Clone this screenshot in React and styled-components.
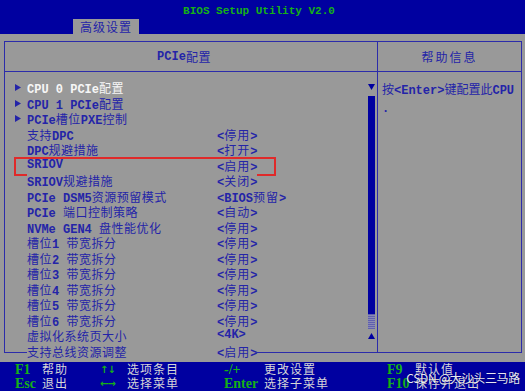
import React from 'react';
import styled, { createGlobalStyle } from 'styled-components';

const BAR = '#0000a0';
const INK = '#2424a8';
const GRAY = '#999999';
const LINE = '#2c2caa';
const GREEN = '#16b016';

const Global = createGlobalStyle`
  html, body { margin: 0; padding: 0; background: ${GRAY}; }
  body { font-family: "Liberation Mono", "Noto Sans CJK SC", monospace; }
`;

const Han = styled.span`
  font-family: "Noto Sans CJK SC", sans-serif;
  font-weight: 400;
  letter-spacing: ${(p) => p.$ls}px;
`;

function T({ children, ls = 0.5 }) {
  const parts = String(children).split(/([\u3400-\u9fff]+)/);
  return parts.map((s, i) =>
    i % 2 ? (
      <Han key={i} $ls={ls}>
        {s}
      </Han>
    ) : (
      s
    )
  );
}

const Screen = styled.div`
  position: relative;
  width: 525px;
  height: 391px;
  overflow: hidden;
  background: ${GRAY};
  display: flex;
  flex-direction: column;
`;

const TopBar = styled.header`
  height: 34px;
  background: ${BAR};
  display: flex;
  flex-direction: column;
  justify-content: space-between;
`;

const Title = styled.div`
  padding: 4px 7px 0 0;
  text-align: center;
  color: ${GREEN};
  font: bold 11px/14px "Liberation Mono", monospace;
`;

const Tab = styled.div`
  margin-left: 73px;
  width: 66px;
  height: 15px;
  background: ${GRAY};
  color: ${INK};
  font-size: 12px;
  line-height: 16px;
  text-align: center;
`;

const Main = styled.main`
  flex: 1;
  padding: 7px 3px 0 4px;
`;

const Panel = styled.section`
  width: 516px;
  border: 1px solid ${LINE};
  display: grid;
  grid-template-columns: 373px 143px;
  grid-template-rows: 30px 280px;
`;

const HeadCell = styled.div`
  border-bottom: 1px solid ${LINE};
  border-right: ${(p) => (p.$divider ? `1px solid ${LINE}` : 'none')};
  display: flex;
  align-items: center;
  justify-content: center;
  padding-right: ${(p) => p.$shift || 0}px;
  color: ${INK};
  font-weight: bold;
  font-size: 12px;
`;

const LeftBody = styled.div`
  border-right: 1px solid ${LINE};
  display: flex;
  min-height: 0;
`;

const List = styled.div`
  flex: 1;
  padding-top: 8px;
  display: flex;
  flex-direction: column;
`;

const Row = styled.div`
  position: relative;
  display: flex;
  height: 15.5px;
  line-height: 15.5px;
  font-size: 12px;
  font-weight: bold;
  color: ${INK};
`;

const Gutter = styled.div`
  width: 22px;
  display: flex;
  align-items: center;
  padding-left: 10px;
  box-sizing: border-box;
`;

const Content = styled.div`
  width: 230px;
  display: flex;
  background: ${GRAY};
  white-space: nowrap;
`;

const Label = styled.span`
  width: 190px;
  flex: none;
  color: ${(p) => (p.$active ? '#f6f6f6' : INK)};
`;

const Value = styled.span`
  flex: none;
`;

const Mark = styled.div`
  position: absolute;
  left: 9px;
  top: -0.5px;
  width: 262px;
  height: 19px;
  box-sizing: border-box;
  border: 2px solid #e02a2a;
  pointer-events: none;
`;

const Scroll = styled.div`
  width: 7px;
  margin-right: 2px;
  padding-top: 11px;
  display: flex;
  flex-direction: column;
  align-items: center;
`;

const Thumb = styled.div`
  margin-top: 6px;
  width: 7px;
  height: 218px;
  background: ${BAR};
`;

const Stipple = styled.div`
  width: 7px;
  height: 15px;
  background-color: #8a8ab4;
  background-image: repeating-linear-gradient(
    0deg,
    rgba(60, 60, 170, 0.55) 0 1px,
    transparent 1px 2px
  );
  margin-bottom: 4px;
`;

const RightBody = styled.div`
  padding: 8px 0 0 4px;
  color: ${INK};
  font-size: 12px;
  font-weight: bold;
  line-height: 18px;
  white-space: nowrap;
`;

const Footer = styled.footer`
  height: 29px;
  box-sizing: border-box;
  background: ${BAR};
  padding: 1px 0 0 15px;
  display: grid;
  grid-template-columns: 27px 58px 27px 97px 40px 123px 28px 1fr;
  grid-auto-rows: 14px;
  align-items: center;
`;

const Key = styled.span`
  color: ${GREEN};
  font: bold 14px/14px "Liberation Serif", serif;
  white-space: nowrap;
`;

const ArrowKey = styled.span`
  color: ${GREEN};
  font: bold 10px/14px "DejaVu Sans", sans-serif;
  letter-spacing: -1px;
`;

const Desc = styled.span`
  color: #d6d6d6;
  font-size: 12px;
  line-height: 14px;
  white-space: nowrap;
`;

const Watermark = styled.div`
  position: absolute;
  right: 5px;
  bottom: 6px;
  color: rgba(255, 255, 255, 0.92);
  font: 12px/14px "Noto Sans CJK SC", sans-serif;
  text-shadow: 0 0 2px rgba(0, 0, 0, 0.5);
  letter-spacing: -0.3px;
`;

const Tri = ({ dir }) => (
  <svg width="7" height="7" viewBox="0 0 7 7">
    {dir === 'right' && <polygon points="0,0 6,3.5 0,7" fill={INK} />}
    {dir === 'down' && <polygon points="0,1 7,1 3.5,7" fill={BAR} />}
    {dir === 'up' && <polygon points="3.5,0 7,6 0,6" fill={BAR} />}
  </svg>
);

const rows = [
  { label: 'CPU 0 PCIe配置', sub: true, active: true },
  { label: 'CPU 1 PCIe配置', sub: true },
  { label: 'PCIe槽位PXE控制', sub: true },
  { label: '支持DPC', value: '<停用>' },
  { label: 'DPC规避措施', value: '<打开>' },
  { label: 'SRIOV', value: '<启用>', mark: true },
  { label: 'SRIOV规避措施', value: '<关闭>' },
  { label: 'PCIe DSM5资源预留模式', value: '<BIOS预留>' },
  { label: 'PCIe 端口控制策略', value: '<自动>' },
  { label: 'NVMe GEN4 盘性能优化', value: '<停用>' },
  { label: '槽位1 带宽拆分', value: '<停用>' },
  { label: '槽位2 带宽拆分', value: '<停用>' },
  { label: '槽位3 带宽拆分', value: '<停用>' },
  { label: '槽位4 带宽拆分', value: '<停用>' },
  { label: '槽位5 带宽拆分', value: '<停用>' },
  { label: '槽位6 带宽拆分', value: '<停用>' },
  { label: '虚拟化系统页大小', value: '<4K>' },
  { label: '支持总线资源调整', value: '<启用>' },
];

const keys = [
  [<Key>F1</Key>, '帮助', <ArrowKey>↑↓</ArrowKey>, '选项条目', <Key>-/+</Key>, '更改设置', <Key>F9</Key>, '默认值'],
  [<Key>Esc</Key>, '退出', <ArrowKey>←→</ArrowKey>, '选择菜单', <Key>Enter</Key>, '选择子菜单', <Key>F10</Key>, '保存并退出'],
];

export default function App() {
  return (
    <>
      <Global />
      <Screen>
        <TopBar>
          <Title>BIOS Setup Utility V2.0</Title>
          <Tab>
            <T ls={1}>高级设置</T>
          </Tab>
        </TopBar>
        <Main>
          <Panel>
            <HeadCell $divider $shift={14}>
              <T>PCIe配置</T>
            </HeadCell>
            <HeadCell>
              <T ls={2}>帮助信息</T>
            </HeadCell>
            <LeftBody>
              <List>
                {rows.map((r, i) => (
                  <Row key={i}>
                    <Gutter>{r.sub && <Tri dir="right" />}</Gutter>
                    <Content>
                      <Label $active={r.active}>
                        <T>{r.label}</T>
                      </Label>
                      {r.value && (
                        <Value>
                          <T ls={1}>{r.value}</T>
                        </Value>
                      )}
                    </Content>
                    {r.mark && <Mark />}
                  </Row>
                ))}
              </List>
              <Scroll>
                <Tri dir="down" />
                <Thumb />
                <Stipple />
                <Tri dir="up" />
              </Scroll>
            </LeftBody>
            <RightBody>
              <T ls={0}>按&lt;Enter&gt;键配置此CPU</T>
              <br />.
            </RightBody>
          </Panel>
        </Main>
        <Footer>
          {keys.map((line, li) =>
            line.map((item, i) =>
              i % 2 ? (
                <Desc key={`${li}-${i}`}>
                  <T ls={1}>{item}</T>
                </Desc>
              ) : (
                <React.Fragment key={`${li}-${i}`}>{item}</React.Fragment>
              )
            )
          )}
        </Footer>
        <Watermark>CSDN @大沙头三马路</Watermark>
      </Screen>
    </>
  );
}
